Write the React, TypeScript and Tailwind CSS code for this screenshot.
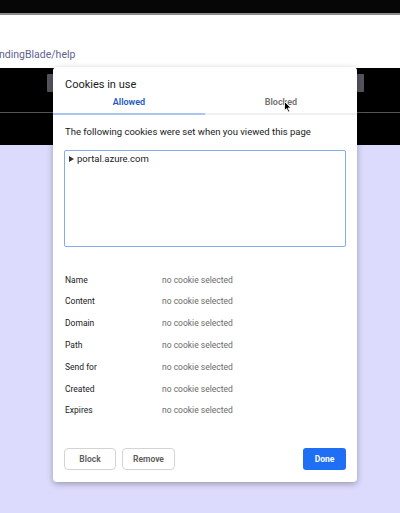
import React from "react";

const rows = ["Name", "Content", "Domain", "Path", "Send for", "Created", "Expires"];

export default function App() {
  return (
    <div className="relative w-[400px] h-[513px] overflow-hidden bg-[#dcdbfd]" style={{ fontFamily: "Roboto, 'Liberation Sans', sans-serif" }}>
      <div className="h-[15px] bg-[#060606] border-b-2 border-[#8a8a8a]" />
      <div className="h-[53px] bg-white flex items-end">
        <span className="text-[10.5px] text-[#5f5f8f] leading-none mb-[8px] -ml-[1px]">ndingBlade/help</span>
      </div>
      <div className="h-[77px] bg-black flex flex-col">
        <div className="h-[45px] flex justify-between items-start pt-[6px] pl-[47px] pr-[36px] border-b border-[#555]">
          <div className="w-[7px] h-[18px] bg-[#55555f] rounded-[1px]" />
          <div className="w-[7px] h-[18px] bg-[#55555f] rounded-[1px]" />
        </div>
      </div>

      <div className="absolute left-[53px] top-[67px] w-[304px] h-[415px] bg-white rounded-[4px] shadow-[0_2px_6px_rgba(0,0,0,0.3)] flex flex-col">
        <div className="pt-[11px] pl-[12px] text-[11px] leading-[14px] text-[#202124]">Cookies in use</div>
        <div className="flex">
          <div className="flex-1 h-[23px] flex items-center justify-center text-[9px] font-semibold text-[#1a56c6] border-b-2 border-[#a9c6f2]">Allowed</div>
          <div className="flex-1 h-[23px] flex items-center justify-center text-[9px] font-semibold text-[#6f6f6f] border-b-2 border-[#f0f0f0] relative">
            Blocked
            <svg className="absolute left-[79px] top-[9px]" width="8" height="12" viewBox="0 0 8 12">
              <path d="M0.5 0.5 L0.5 9.5 L2.6 7.6 L4.2 11 L5.6 10.3 L4 7 L7 7 Z" fill="#000" stroke="#fff" strokeWidth="0.8" />
            </svg>
          </div>
        </div>
        <div className="mt-[10px] pl-[12px] text-[9.5px] leading-[14px] text-[#202124]">The following cookies were set when you viewed this page</div>
        <div className="mt-[11px] mx-[11px] h-[97px] border border-[#86abe9] rounded-[2px] pt-[2px] pl-[4px] flex items-start">
          <div className="flex items-center h-[12px] gap-[3px]">
            <svg width="5" height="6" viewBox="0 0 5 6"><path d="M0 0 L5 3 L0 6 Z" fill="#333" /></svg>
            <span className="text-[9.5px] text-[#202124] leading-[12px]">portal.azure.com</span>
          </div>
        </div>
        <div className="mt-[22px] flex flex-col">
          {rows.map((r) => (
            <div key={r} className="h-[21.8px] flex items-center text-[8.5px]">
              <span className="w-[109px] pl-[12px] text-[#202124]">{r}</span>
              <span className="text-[#6b6b6b]">no cookie selected</span>
            </div>
          ))}
        </div>
        <div className="mt-auto mb-[12px] mx-[11px] flex items-center">
          <button className="w-[52px] h-[22px] border border-[#d4d4d4] rounded-[4px] text-[8.5px] font-semibold text-[#5a5a5a]">Block</button>
          <button className="ml-[6px] w-[53px] h-[22px] border border-[#d4d4d4] rounded-[4px] text-[8.5px] font-semibold text-[#5a5a5a]">Remove</button>
          <button className="ml-auto w-[43px] h-[22px] bg-[#1f6ff5] rounded-[3px] text-[8.5px] font-bold text-white">Done</button>
        </div>
      </div>
    </div>
  );
}
